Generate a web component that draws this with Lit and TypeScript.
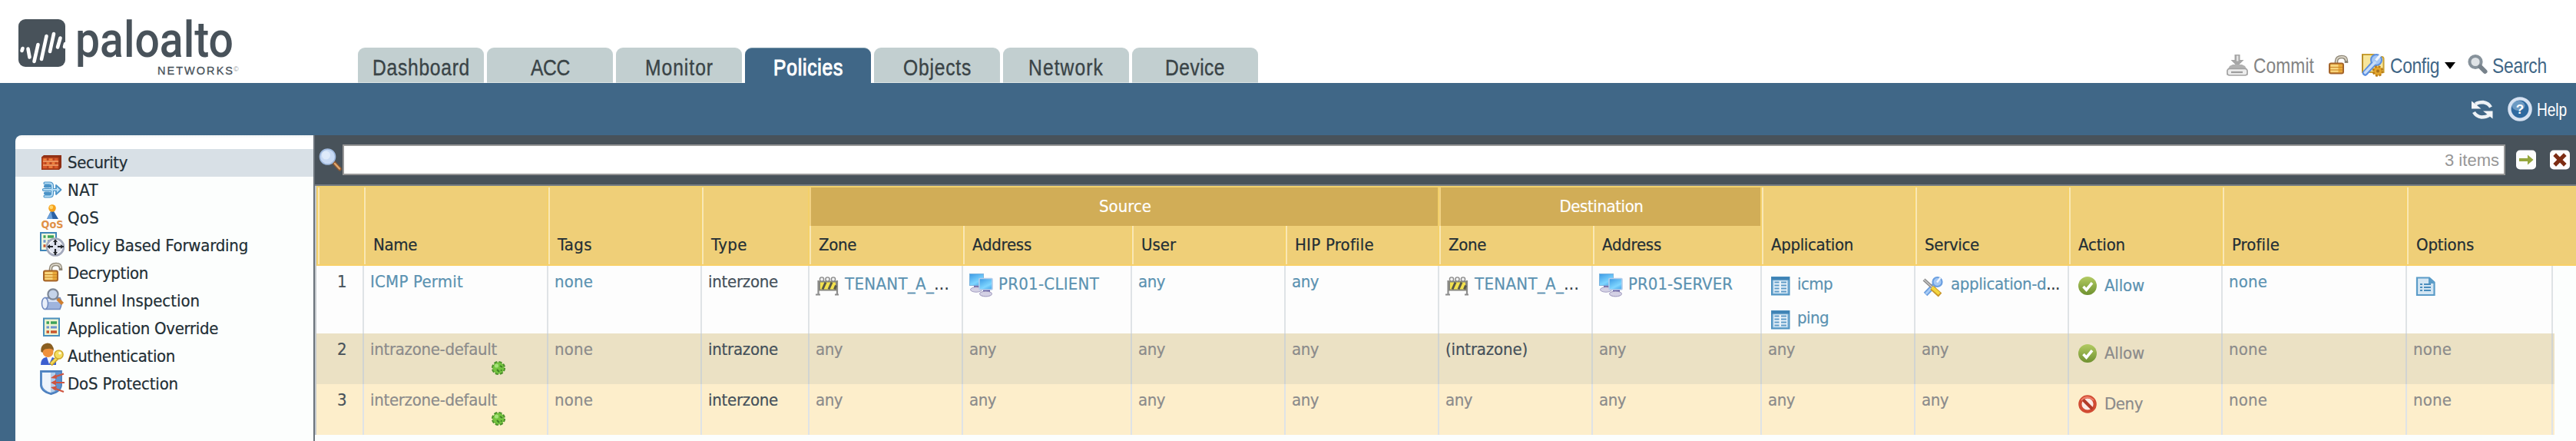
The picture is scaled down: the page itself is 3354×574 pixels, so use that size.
import { LitElement, html, svg, css, nothing, TemplateResult } from "lit";
import { customElement, property } from "lit/decorators.js";

/** One line of text tracked so that it fills a set width. */
@customElement("fit-text")
class FitText extends LitElement {
  static styles = css`
    :host { display: inline-block; white-space: nowrap; flex: none; }
    span { display: inline-block; transform-origin: 0 50%; white-space: pre; }
    .tail { font-style: normal; color: #2c3840; }
  `;
  @property() text = "";
  @property() tail = "";
  @property({ type: Number }) w = 0;
  @property({ type: Number }) sx = 1;

  render() {
    return html`<span>${this.text}${this.tail ? html`<i class="tail">${this.tail}</i>` : nothing}</span>`;
  }
  updated() {
    const s = this.renderRoot.querySelector("span") as HTMLElement;
    s.style.letterSpacing = "0px";
    const natural = s.getBoundingClientRect().width;
    const n = (this.text + this.tail).length;
    s.style.letterSpacing = `${(this.w / this.sx - natural) / n}px`;
    if (this.sx !== 1) s.style.transform = `scaleX(${this.sx})`;
    this.style.width = `${this.w}px`;
  }
}

const t = (text: string, w: number, sx = 1, tail = "") =>
  html`<fit-text .text=${text} .w=${w} .sx=${sx} .tail=${tail}></fit-text>`;

const padlock = svg`
  <path d="M14 18V12q0-6 7-6q6 0 6 6v2" fill="none" stroke="#8d8575" stroke-width="4.6"/>
  <path d="M14 17V12q0-6 7-6q6 0 6 5" fill="none" stroke="#d9d4c6" stroke-width="1.8"/>
  <rect x="5" y="14.5" width="18" height="13" rx="2" fill="#e9a93a" stroke="#a5652a" stroke-width="2"/>
  <rect x="6.5" y="16" width="10" height="10" fill="#fbdf8d" opacity=".8"/>
  <path d="M6 19.5h16M6 23h16" stroke="#c98526" stroke-width="1.2"/>`;

const checkIcon = svg`
  <defs><linearGradient id="g" x1="0" y1="0" x2="0" y2="1"><stop offset="0" stop-color="#b3cb63"/><stop offset="1" stop-color="#6f9130"/></linearGradient></defs>
  <circle cx="16" cy="16" r="12" fill="url(#g)"/>
  <path d="M10.5 17l4 4.2 7.5-9" fill="none" stroke="#fff" stroke-width="3.6"/>`;

const icons: Record<string, unknown> = {
  wall: svg`
    <path d="M2 10.5L5 8H28V24l-3 3H2z" fill="#8e2f14"/>
    <rect x="2.8" y="11" width="21.5" height="15" rx="1" fill="#d9582a" stroke="#a23a17" stroke-width="1.6"/>
    <path d="M4 16h20M4 21h20" stroke="#f0a670" stroke-width="1.4"/>
    <path d="M10 12v3M18 12v3M14 17v3M21 17v3M7 17v3M10 22v3M18 22v3" stroke="#a8401c" stroke-width="1.4"/>
    <path d="M4.500 13.500h4M12 13.500h4M9 18.500h3M16 18.500h3M12 23.500h4" stroke="#ee8a40" stroke-width="2"/>`,
  nat: svg`
    <g fill="none" stroke-linecap="round" stroke-linejoin="round">
    <path d="M6.500 8.500h6q3.500 0 3.500 3.500v10q0 3.500-3.500 3.500h-6M5 17h17M7 12.500h5M7 21.500h5" stroke="#4a93c7" stroke-width="4.200"/>
    <path d="M21 11l6.500 6-6.500 6z" fill="#bfe2f6" stroke="#4a93c7" stroke-width="1.800"/>
    <path d="M6.500 8.500h6q3.500 0 3.500 3.500v10q0 3.500-3.500 3.500h-6M5 17h18" stroke="#b4dcf4" stroke-width="2"/></g>`,
  qos: svg`
    <path d="M9 19l5-10h4l6 10z" fill="#2b62a5"/><path d="M9 19l5.500-10 2 10z" fill="#6ca3dc"/>
    <circle cx="16" cy="5" r="4.800" fill="#f6a21c"/><circle cx="14.800" cy="3.800" r="2.400" fill="#ffd66e"/>
    <text x="1.500" y="31" font-family="DejaVu Sans" font-weight="bold" font-size="14" textLength="29" lengthAdjust="spacingAndGlyphs" fill="#e09148">QoS</text>`,
  pbf: svg`
    <rect x="1" y="1" width="20" height="23" fill="#eef6dc" stroke="#3f86b8" stroke-width="2"/>
    <path d="M4.500 6h3M10 6h8" stroke="#3ea35a" stroke-width="3.500"/><path d="M4.500 12h3M10 12h4" stroke="#6f94cc" stroke-width="3.500"/><path d="M4.500 18h3" stroke="#c9552c" stroke-width="3.500"/>
    <circle cx="20" cy="19.500" r="11" fill="#dfe3ef" stroke="#a3a9bb" stroke-width="2.600"/>
    <circle cx="20" cy="19.500" r="8.600" fill="none" stroke="#f4f6fb" stroke-width="1.500"/>
    <path d="M20 10v7M20 22v8M10 19h7M23 19h8" stroke="#23262b" stroke-width="2.200"/>
    <path d="M17 13h6l-3-3.500zM17 26h6l-3 3.500zM13 16v6l-3.500-3zM27 16v6l3.500-3z" fill="#23262b"/>`,
  lock: padlock,
  tunnel: svg`
    <path d="M7 13.500h19q4 7 0 15H7z" fill="#9fb4dd" stroke="#7089be" stroke-width="1.600"/>
    <path d="M9 15h17v4H9z" fill="#d9e3f5"/>
    <ellipse cx="6.500" cy="21" rx="4" ry="7.500" fill="#e9effa" stroke="#7089be" stroke-width="1.500"/>
    <circle cx="17" cy="9" r="6.600" fill="#c5d4ea" stroke="#7d8796" stroke-width="2.200"/>
    <path d="M21.500 13.500l2 2" stroke="#7d8796" stroke-width="3"/><path d="M23 15l6.500 6.500" stroke="#cf7f2f" stroke-width="4.400"/>`,
  override: svg`
    <rect x="5" y="4.500" width="20" height="22.500" fill="#eef3d0" stroke="#4a90bd" stroke-width="2"/>
    <path d="M8.500 10h3.500M14 10h8" stroke="#3ea35a" stroke-width="3.600"/>
    <path d="M8.500 16h3.500M14 16h8" stroke="#6f94d0" stroke-width="3.200"/>
    <path d="M8.500 22h3.500M14 22h8" stroke="#c9552c" stroke-width="3.600"/>`,
  auth: svg`
    <path d="M1 29q0-9 7-10h8q6 1 5 10z" fill="#3c5fd0"/><path d="M9 19l3 9 4-9z" fill="#f4f7ff"/>
    <circle cx="10.500" cy="12" r="7" fill="#f0913c"/>
    <path d="M1.500 12Q0 2 10 .5Q18 1 18 11Q16 7 10 8Q4 8 3.500 13z" fill="#8a5f21"/>
    <path d="M14 28.500l9-9" stroke="#c9a325" stroke-width="5"/><path d="M14.500 27.500l9-9" stroke="#f3d95c" stroke-width="2.500"/>
    <circle cx="24.500" cy="15.500" r="5.600" fill="#f4dd5f" stroke="#cfa82c" stroke-width="1.500"/><circle cx="26" cy="13.800" r="1.800" fill="#fffbe0"/>`,
  dos: svg`
    <path d="M1 1H28V20Q27 28 14.500 31Q2 28 1 20z" fill="#5f93cf" stroke="#4c7fbd" stroke-width="1.800"/>
    <path d="M3 3h11v26Q4 26 3 19z" fill="#eef4fb"/><path d="M14 3h6v24l-6 2z" fill="#b4cfec"/>
    <path d="M31 4.500L18 9M32 16H18M31 28L18 23" stroke="#cf5540" stroke-width="2.200"/>
    <path d="M14 10l7-5 1 6zM14 16l7-3.500v7zM14 22l8-1.500-2 6z" fill="#cf5540"/>`,
  commit: svg`
    <path d="M12.500 3h7v7h5l-8.500 8.500L7.500 10h5z" fill="#a6a6a6"/><path d="M15 4.500h2.500v7h-2.500z" fill="#e4e4e4"/>
    <path d="M6 18l4-2h12l4 2 3.500 6v6h-27v-6z" fill="#b1b1b1"/>
    <rect x="3" y="21.500" width="26" height="8.500" rx="3" fill="#ececec" stroke="#a2a2a2" stroke-width="1.600"/><path d="M8 26h15" stroke="#9d9d9d" stroke-width="2.200"/>`,
  config: svg`
    <path d="M3 3h15l2 3h8q3 0 2.500 4V26H3z" fill="#f6e59a" stroke="#c9a032" stroke-width="2"/><path d="M3 3V26" stroke="#b98f2a" stroke-width="2"/>
    <path d="M6.500 27L19 13" stroke="#5b8fe0" stroke-width="7.400" stroke-linecap="round"/>
    <circle cx="21" cy="10" r="7" fill="#a3c6f5" stroke="#5b8fe0" stroke-width="2"/><path d="M20.500 10.500l6-7" stroke="#f0f5fc" stroke-width="3.400"/>
    <path d="M6.500 26.500L19 13.500" stroke="#c6dcf8" stroke-width="3.600" stroke-linecap="round"/>
    <circle cx="23" cy="24.500" r="6" fill="#e2a52c" stroke="#b87b18" stroke-width="2.600" stroke-dasharray="2.800 1.900"/><circle cx="23" cy="24.500" r="2" fill="#a8701a"/>`,
  search: svg`
    <circle cx="13" cy="12.500" r="7.600" fill="#dfe3e6" stroke="#87929b" stroke-width="4"/>
    <path d="M19.500 19l6 6" stroke="#77828b" stroke-width="6" stroke-linecap="round"/>`,
  find: svg`
    <path d="M19 20l7.500 8" stroke="#8d5a34" stroke-width="5" stroke-linecap="round"/><path d="M20 21l6 6.500" stroke="#e0a970" stroke-width="2.400" stroke-linecap="round"/>
    <circle cx="10.500" cy="12" r="10" fill="#c8daf4" stroke="#9fb9de" stroke-width="1.600"/><circle cx="8.500" cy="10" r="5.500" fill="#deeafa"/>`,
  refresh: svg`
    <g fill="none" stroke="#eef2f5" stroke-width="4.400"><path d="M7 9.500Q11 7 17 7Q24 8 27 13.500"/><path d="M25 24Q21 26.500 15 26.500Q8 25.500 5 20"/></g>
    <path d="M2 5.500v10h12.500zM29.500 28.500V18.500H17z" fill="#f4f6f8"/>`,
  help: svg`
    <circle cx="16" cy="16" r="13.600" fill="#2f6aa0" stroke="#d6e2f2" stroke-width="4.400"/>
    <ellipse cx="14" cy="11.500" rx="8.500" ry="6.500" fill="#8db4d6" opacity=".65"/>
    <text x="16" y="22" text-anchor="middle" font-family="Liberation Sans" font-weight="bold" font-size="17" fill="#fff">?</text>`,
  go: svg`
    <rect x="3" y="3.500" width="26" height="25" rx="5" fill="#fdfdfd"/>
    <path d="M7 14h11V9.500l7.500 6.500-7.500 6.500V18H7z" fill="#95a63c"/>`,
  clear: svg`
    <rect x="3" y="3.500" width="26" height="25" rx="5" fill="#fdfdfd"/>
    <path d="M11 11l10 10M21 11l-10 10" stroke="#7d2d14" stroke-width="5.200" stroke-linecap="square"/>`,
  zone: svg`
    <g transform="translate(0 1)"><path d="M3.500 8v19M28 8v19M0 26.500h6M25 26.500h5" stroke="#8d8d8d" stroke-width="2.200"/>
    <rect x="5" y="9.500" width="22" height="11" fill="#f3e14f" stroke="#85857c" stroke-width="2"/>
    <path d="M9 19.500l4-9M17 19.500l4-9M24.500 19.500l2-5" stroke="#57564a" stroke-width="3"/>
    <g fill="#f2f2f2" stroke="#8a8a8a" stroke-width="1.400"><circle cx="8" cy="6.500" r="2.600"/><circle cx="15.500" cy="6.500" r="2.600"/><circle cx="23" cy="6.500" r="2.600"/></g></g>`,
  hosts: svg`
    <defs><linearGradient id="s" x1="0" y1="0" x2=".6" y2="1"><stop offset="0" stop-color="#3a98e4"/><stop offset=".75" stop-color="#7fd6ff"/><stop offset="1" stop-color="#5bb4f0"/></linearGradient></defs>
    <path d="M6 15h8v5H6z" fill="#6d63a5"/><ellipse cx="9" cy="21" rx="7.500" ry="3.200" fill="#d4d1e4" stroke="#a7a2c4"/>
    <rect x=".500" y=".500" width="18" height="15" fill="url(#s)" stroke="#7db4de"/>
    <path d="M18 20h9v6h-9z" fill="#5d529b"/><ellipse cx="21.500" cy="26.500" rx="8" ry="3.400" fill="#d4d1e4" stroke="#9a94bb"/>
    <rect x="13" y="6.500" width="17" height="14.500" rx="1" fill="url(#s)" stroke="#b5cdea" stroke-width="1.600"/>`,
  app: svg`
    <rect x="5" y="5" width="22.500" height="22.500" fill="#9cc4e2" stroke="#4f93c2" stroke-width="2"/>
    <rect x="4.500" y="4.500" width="23.500" height="4" fill="#3f83b5"/><rect x="7.500" y="9.500" width="17.500" height="16" fill="#eaf3fa"/>
    <path d="M8.500 11.500h6M17 11.500h7M8.500 15.500h6M17 15.500h7M8.500 19.500h6M17 19.500h7M8.500 23.500h6M17 23.500h7" stroke="#5f9bc7" stroke-width="2"/>`,
  service: svg`
    <path d="M5 27L18 13.500" stroke="#6b9fe0" stroke-width="6.400"/><path d="M5.500 26.500L18 13.500" stroke="#a9ccf5" stroke-width="2.800"/>
    <circle cx="20.500" cy="11" r="6" fill="#a5c8f4" stroke="#6b9fe0" stroke-width="2.200"/><path d="M20 11.500l4.500-6" stroke="#f0f5fc" stroke-width="2.400"/>
    <path d="M3 8l11 10" stroke="#8a8a8a" stroke-width="4.200"/><path d="M3 8l11 10" stroke="#c9c9c9" stroke-width="1.400"/>
    <path d="M13.500 18.500l10.500 9.500" stroke="#c9962a" stroke-width="6.800"/><path d="M13.500 18l9.500 8.500" stroke="#f3d63e" stroke-width="4"/>`,
  allow: checkIcon,
  deny: svg`
    <circle cx="16" cy="16" r="9.700" fill="#fbeae4" stroke="#d14b33" stroke-width="4.200"/>
    <path d="M9.500 9.500l13 13" stroke="#b23a28" stroke-width="4"/>
    <path d="M8 11q7-8 16 0" fill="none" stroke="#ee806a" stroke-width="2"/>`,
  log: svg`
    <path d="M5 5.500h16l6.500 6V28H5z" fill="#d4e6f3" stroke="#5b9cc8" stroke-width="2.200"/><path d="M20 5v8h8z" fill="#5b9cc8"/>
    <path d="M9 14h3M14 14h9M9 18h3M14 18h9M9 22h3M14 22h9" stroke="#4a8dbd" stroke-width="2"/>`,
};

const icon = (name: string, cls = "") =>
  html`<svg class="icon ${cls}" viewBox="0 0 32 32" aria-hidden="true">${icons[name]}</svg>`;

const gear = html`<svg class="gear" viewBox="0 0 20 20" aria-hidden="true">
  <circle cx="10" cy="10" r="7.600" fill="#5faf35" stroke="#4d8f2c" stroke-width="3" stroke-dasharray="4 2"/>
  <circle cx="10" cy="10" r="7.200" fill="#74c43f"/><circle cx="7.500" cy="7" r="2.600" fill="#a6e27a"/>
  <path d="M12 7l3 2M8 12l3 3M13 12.500l1.500 1" stroke="#3f7f25" stroke-width="2"/></svg>`;

const menu: [string, string, number][] = [
  ["wall", "Security", 78], ["nat", "NAT", 40], ["qos", "QoS", 41],
  ["pbf", "Policy Based Forwarding", 235], ["lock", "Decryption", 105],
  ["tunnel", "Tunnel Inspection", 172], ["override", "Application Override", 196],
  ["auth", "Authentication", 140], ["dos", "DoS Protection", 144],
];

const tabs: [string, number][] = [
  ["Dashboard", 127], ["ACC", 51], ["Monitor", 89], ["Policies", 91],
  ["Objects", 89], ["Network", 98], ["Device", 78],
];

const widths: Record<string, number> = {
  "1": 12, "2": 12, "3": 12, none: 50, any: 35, interzone: 91, intrazone: 91,
  "(intrazone)": 107, "ICMP Permit": 121, "intrazone-default": 165, "interzone-default": 165,
  "TENANT_A_": 136, "PR01-CLIENT": 131, "PR01-SERVER": 136, icmp: 46, ping: 41,
  "application-d": 142, Allow: 52, Deny: 50,
};

type Cell = { text?: string; icon?: string; tail?: string; more?: Cell; kind?: string; gear?: boolean };
const dark = (text: string): Cell => ({ text, kind: "dark" });

const rows: { cls: string; cells: Cell[] }[] = [
  {
    cls: "first",
    cells: [
      { text: "ICMP Permit" }, { text: "none" }, dark("interzone"),
      { icon: "zone", text: "TENANT_A_", tail: "..." }, { icon: "hosts", text: "PR01-CLIENT" },
      { text: "any" }, { text: "any" },
      { icon: "zone", text: "TENANT_A_", tail: "..." }, { icon: "hosts", text: "PR01-SERVER" },
      { icon: "app", text: "icmp", more: { icon: "app", text: "ping" } },
      { icon: "service", text: "application-d", tail: "..." },
      { icon: "allow", text: "Allow", kind: "act" }, { text: "none" }, { icon: "log" },
    ],
  },
  {
    cls: "second",
    cells: [
      { text: "intrazone-default", gear: true }, { text: "none" }, dark("intrazone"),
      { text: "any" }, { text: "any" }, { text: "any" }, { text: "any" }, dark("(intrazone)"),
      { text: "any" }, { text: "any" }, { text: "any" },
      { icon: "allow", text: "Allow", kind: "act" }, { text: "none" }, { text: "none" },
    ],
  },
  {
    cls: "third",
    cells: [
      { text: "interzone-default", gear: true }, { text: "none" }, dark("interzone"),
      { text: "any" }, { text: "any" }, { text: "any" }, { text: "any" }, { text: "any" },
      { text: "any" }, { text: "any" }, { text: "any" },
      { icon: "deny", text: "Deny", kind: "act" }, { text: "none" }, { text: "none" },
    ],
  },
];

const head = (label: string, w: number, cls = "tall") => html`<div class="th ${cls}">${t(label, w)}</div>`;

@customElement("app-root")
class AppRoot extends LitElement {
  static styles = css`
    :host {
      display: flex; flex-direction: column; width: 3354px; height: 574px; overflow: hidden;
      background: #fff; font: 22px/26px "DejaVu Sans Condensed", "DejaVu Sans", sans-serif; color: #222e35;
    }
    * { box-sizing: border-box; }
    svg { overflow: visible; }
    .icon { width: 32px; height: 32px; flex: none; display: block; }
    .top { height: 108px; display: flex; align-items: flex-end; font-family: "Liberation Sans", sans-serif; flex: none; }
    .brand { width: 466px; height: 108px; padding-left: 24px; flex: none; }
    .brand svg { display: block; width: 300px; height: 108px; }
    .tabs { display: flex; gap: 4px; }
    .tab {
      width: 164px; height: 46px; border-radius: 9px 9px 0 0; background: #c2cfd0; color: #3a4447;
      padding-top: 5px; text-align: center; font-size: 30px; line-height: 41px; border-bottom: 1px solid #dbe4e5;
      -webkit-text-stroke: .4px currentColor;
    }
    .tab.on { background: #406787; color: #fff; border-bottom-color: #406787; border-top: 1px solid #7796a8; padding-top: 4px; -webkit-text-stroke: 1.100px #fff; }
    .actions { margin-left: auto; display: flex; align-items: flex-start; height: 40px; padding-right: 38px; font-size: 28.5px; line-height: 35px; color: #3f6686; }
    .muted { color: #848484; }
    .g17 { margin-left: 17px; } .g16 { margin-left: 15px; } .g14 { margin-left: 13px; }
    .g7 { margin-left: 7px; } .g6 { margin-left: 6px; } .g4 { margin-left: 5px; } .g3 { margin-left: 3px; }
    .caret { width: 14px; height: 9px; margin: 13px 0 0 7px; background: #000; clip-path: polygon(0 0, 100% 0, 50% 100%); }
    .strip {
      height: 68px; background: #406787; display: flex; align-items: flex-start; justify-content: flex-end; flex: none;
      padding: 18px 12px 0 0; color: #fff; font: 24px/34px "Liberation Sans", sans-serif;
    }
    .body { flex: 1; display: flex; background: #406787; padding-left: 20px; min-height: 0; }
    .side {
      width: 388px; background: linear-gradient(#f1f3f4, #fff 4px, #fff 18px, #fcfefd 18px);
      border-top-left-radius: 8px; padding-top: 18px; flex: none; -webkit-text-stroke: .2px currentColor;
    }
    .item { height: 36px; padding-left: 32px; display: flex; gap: 4px; line-height: 36px; }
    .item.on { background: #d8e0e6; }
    .main { flex: 1; background: #fcfefd; border-left: 2px solid #6b737b; min-width: 0; }
    .query { height: 66px; background: #48525a; border-bottom: 2px solid #777d83; display: flex; padding: 12px 5px 0 4px; }
    .query .find { margin: 4px 0 0 2px; }
    .box {
      margin-left: -2px; width: 2816px; height: 40px; background: #fff; border: 2px solid #979797; text-align: right; padding: 6px 6px 0 0;
      font-family: "Liberation Sans", sans-serif; color: #979797;
    }
    .query .go { margin: 4px 0 0 11px; } .query .clear { margin: 4px 0 0 12px; }
    .grid { border-left: 2px solid #c3c8cc; -webkit-text-stroke: .2px currentColor; }
    .thead, .row {
      display: grid;
      grid-template-columns: 62px 240px 200px 140px 200px 220px 200px 200px 200px 220px 200px 200px 200px 240px 190px;
    }
    .thead { background: #efcf78; border-top: 2px solid #f1d16f; border-bottom: 2px solid #f8d068; grid-template-rows: 50px 50px; height: 104px; }
    .th { border-left: 2px solid #f9e7b4; box-shadow: -2px 0 0 #f3d06a; padding: 12px 0 0 10px; }
    .th.tall { grid-row: 1 / span 2; padding-top: 62px; }
    .th.low { grid-row: 2; }
    .th.group { background: #d1ad57; color: #fff; text-align: center; padding-left: 0; grid-row: 1; border-left-color: #f1d183; }
    .th.lead { margin-left: 2px; }
    .src { grid-column: 5 / span 4; } .dst { grid-column: 9 / span 2; }
    .c5 { grid-column: 5; } .c6 { grid-column: 6; } .c7 { grid-column: 7; } .c8 { grid-column: 8; } .c9 { grid-column: 9; } .c10 { grid-column: 10; }
    .row { width: 2914px; color: #8b8b8b; }
    .first { height: 88px; background: #fdfdfd; color: #5b92b1; }
    .second { height: 66px; background: #ebe1c4; }
    .third { height: 66px; background: #fdeecb; }
    .td { border-right: 2px solid #dfe3e6; padding: 8px 0 0 8px; overflow: hidden; }
    .second .td { border-right-color: #d1d4d1; }
    .row .td:first-child { text-align: right; padding-right: 21px; color: #48525a; }
    .row .td.dark { color: #44505a; }
    .line { display: flex; gap: 6px; height: 32px; margin: 2px 0 12px; }
    .line fit-text { margin-top: 1px; }
    .act .line fit-text { margin-top: 3px; }
    .gear { display: block; width: 20px; height: 20px; margin: 1px 0 0 157px; }
  `;

  private line(c: Cell): TemplateResult {
    return html`<div class="line">${icon(c.icon!)}${c.text ? t(c.text, widths[c.text], 1, c.tail ?? "") : nothing}</div>${c.more ? this.line(c.more) : nothing}`;
  }

  private cell(c: Cell) {
    return html`<div class="td ${c.kind ?? ""}">${c.icon ? this.line(c) : t(c.text!, widths[c.text!])}${c.gear ? gear : nothing}</div>`;
  }

  render() {
    return html`
      <header class="top">
        <div class="brand">
          <svg viewBox="0 0 300 108" role="img">
            <rect x="0" y="25" width="61" height="62" rx="9" fill="#48525a"/>
            <g stroke="#fff" stroke-width="4.600" stroke-linecap="round">
              <path d="M5.500 63l-1 3M12.500 63.500l2 11M25.500 58l-5 22M36.500 47l-6.500 30M46 44l-5 23M54.500 49.500l-3.500 12M61 57l-1 4"/>
            </g>
            <text x="74" y="74" font-family="Roboto" font-weight="500" font-size="64.500" textLength="206" lengthAdjust="spacingAndGlyphs" fill="#48525a">paloalto</text>
            <text x="181" y="97" font-family="Liberation Sans" font-size="14.500" textLength="98" fill="#48525a" stroke="#48525a" stroke-width=".3">NETWORKS</text>
            <text x="280" y="93" font-family="Liberation Sans" font-size="9" fill="#9aa0a5">©</text>
          </svg>
        </div>
        <nav class="tabs">
          ${tabs.map(([n, w]) => html`<div class="tab ${n === "Policies" ? "on" : ""}">${t(n, w, 0.82)}</div>`)}
        </nav>
        <div class="actions">
          ${icon("commit")}<span class="g4 muted">${t("Commit", 79, 0.8)}</span>
          ${icon("lock", "g16")}${icon("config", "g14")}<span class="g7">${t("Config", 64, 0.8)}</span>
          <i class="caret"></i>${icon("search", "g14")}<span class="g3">${t("Search", 71, 0.8)}</span>
        </div>
      </header>
      <div class="strip">${icon("refresh")}${icon("help", "g17")}<span class="g6">${t("Help", 39, 0.8)}</span></div>
      <div class="body">
        <nav class="side">
          ${menu.map(([i, n, w], k) => html`<div class="item ${k === 0 ? "on" : ""}">${icon(i)}${t(n, w)}</div>`)}
        </nav>
        <main class="main">
          <div class="query">
            ${icon("find", "find")}
            <div class="box">${t("3 items", 71)}</div>
            ${icon("go", "go")}${icon("clear", "clear")}
          </div>
          <div class="grid">
            <div class="thead">
              <div class="th tall lead"></div>
              ${head("Name", 57)}${head("Tags", 45)}${head("Type", 47)}
              <div class="th group src">${t("Source", 68)}</div>
              <div class="th group dst">${t("Destination", 109)}</div>
              ${head("Zone", 49, "low c5")}${head("Address", 77, "low c6")}${head("User", 45, "low c7")}${head("HIP Profile", 103, "low c8")}
              ${head("Zone", 49, "low c9")}${head("Address", 77, "low c10")}
              ${head("Application", 107)}${head("Service", 71)}${head("Action", 61)}${head("Profile", 62)}${head("Options", 75)}
            </div>
            ${rows.map((r, i) => html`<div class="row ${r.cls}"><div class="td">${t(String(i + 1), 12)}</div>${r.cells.map((c) => this.cell(c))}</div>`)}
          </div>
        </main>
      </div>`;
  }
}
